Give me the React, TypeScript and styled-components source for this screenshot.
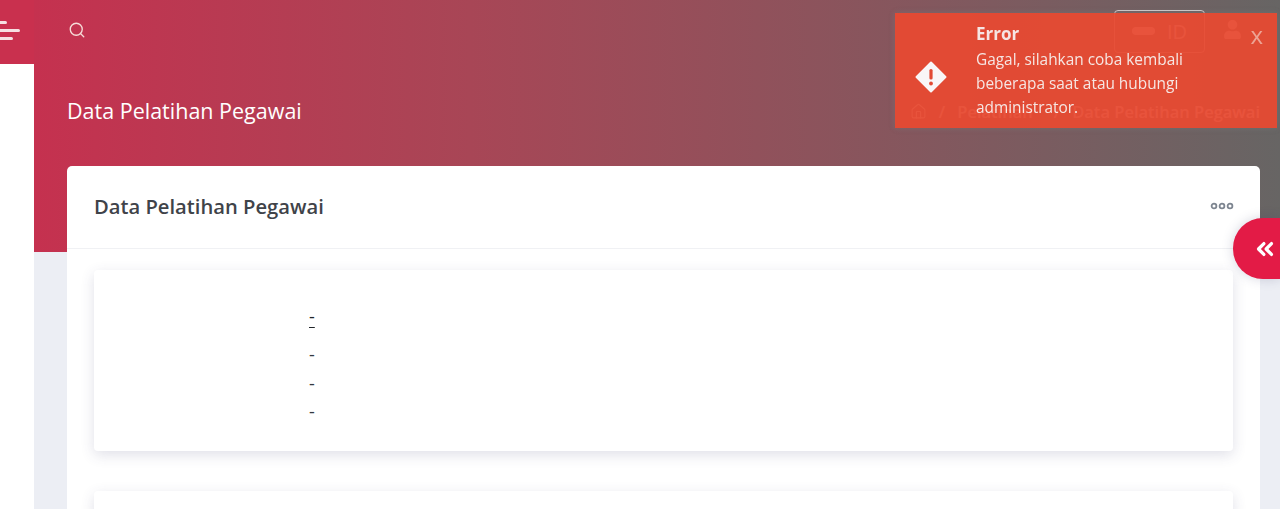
import styled, { createGlobalStyle } from 'styled-components';
import { Search, Home, ChevronsLeft } from 'lucide-react';
import { FaUser } from 'react-icons/fa';

const GlobalStyle = createGlobalStyle`
  html, body {
    margin: 0;
    padding: 0;
    height: 100%;
    overflow: hidden;
    background: #eceef4;
    font-family: "Open Sans", "Noto Sans", sans-serif;
  }
  * {
    box-sizing: border-box;
  }
`;

const Page = styled.div`
  display: flex;
  width: 1280px;
  height: 509px;
  overflow: hidden;
`;

const Sidebar = styled.aside`
  width: 34px;
  flex-shrink: 0;
  display: flex;
  flex-direction: column;
  background: #fff;
`;

const Brand = styled.div`
  height: 64px;
  background: #c9304e;
  display: flex;
  flex-direction: column;
  align-items: flex-start;
  justify-content: center;
  gap: 5px;
  padding-bottom: 4px;
`;

const Bar = styled.span<{ $width: number }>`
  display: block;
  height: 3px;
  width: ${(props) => props.$width}px;
  background: #f6dfe2;
  border-radius: 0 2px 2px 0;
`;

const Main = styled.main`
  flex: 1;
  min-width: 0;
  background:
    linear-gradient(90deg, #c5314f 0%, #a84656 35%, #676564 100%) top left / 100% 252px no-repeat,
    #eceef4;
`;

const Topbar = styled.header`
  height: 60px;
  display: flex;
  align-items: center;
  justify-content: space-between;
  padding: 0 38px 0 34px;
  color: #f6dcd8;
`;

const TopActions = styled.div`
  display: flex;
  align-items: center;
  gap: 18px;
  margin-top: 2px;

  svg {
    margin-top: -4px;
  }
`;

const LangButton = styled.div`
  width: 91px;
  height: 43px;
  border: 1px solid rgba(255, 255, 255, 0.7);
  border-radius: 4px;
  display: flex;
  align-items: center;
  justify-content: center;
  gap: 12px;
  font-size: 20px;
  color: #fff;
`;

const Flag = styled.span`
  width: 23px;
  height: 8px;
  border-radius: 4px;
  background: #fff;
`;

const TitleRow = styled.div`
  height: 104px;
  display: flex;
  align-items: center;
  justify-content: space-between;
  padding: 0 20px 4px 33px;
`;

const PageTitle = styled.h1`
  margin: 0;
  font-size: 21.5px;
  font-weight: 400;
  color: #fff;
`;

const Crumbs = styled.nav`
  display: flex;
  align-items: center;
  gap: 12px;
  margin-top: 2px;
  font-size: 16.5px;
  font-weight: 600;
  color: #fff;
`;

const CrumbParent = styled.span`
  margin-right: 9px;
`;

const Card = styled.section`
  margin: 2px 20px 0 33px;
  background: #fff;
  border-radius: 5px 5px 0 0;
  height: 343px;
  overflow: hidden;
`;

const CardHeader = styled.div`
  height: 83px;
  display: flex;
  align-items: center;
  justify-content: space-between;
  padding: 0 26px 2px 27px;
  border-bottom: 1px solid #f0f1f4;
`;

const CardTitle = styled.h2`
  margin: 0;
  font-size: 20.2px;
  font-weight: 600;
  color: #3f4349;
`;

const MoreDots = styled.svg`
  width: 24px;
  height: 8px;
`;

const CardBody = styled.div`
  padding: 21px 27px 0;
  display: flex;
  flex-direction: column;
  gap: 40px;
`;

const InnerCard = styled.div<{ $tall?: boolean }>`
  height: ${(props) => (props.$tall ? 181 : 60)}px;
  flex-shrink: 0;
  background: #fff;
  border-radius: 4px;
  box-shadow: 0 4px 14px rgba(60, 65, 110, 0.16);
  padding: 32px 0 0 215px;
`;

const DashList = styled.div`
  display: flex;
  flex-direction: column;
  font-size: 18px;
  line-height: 28.5px;
  color: #343a40;
`;

const LinkDash = styled.a`
  color: #212529;
  text-decoration: underline;
  text-underline-offset: 4px;
  line-height: 29px;
  margin-bottom: 9px;
`;

const SideToggle = styled.button`
  position: fixed;
  top: 218px;
  right: 0;
  width: 47px;
  height: 61px;
  padding: 0 0 0 17px;
  border: 0;
  border-radius: 30px 0 0 30px;
  background: #e31b46;
  color: #fff;
  display: flex;
  align-items: center;
  justify-content: center;
  box-shadow: 0 0 12px rgba(60, 65, 110, 0.22);
`;

const Toast = styled.div`
  position: fixed;
  top: 13px;
  left: 895px;
  width: 382px;
  height: 115px;
  display: flex;
  align-items: center;
  padding: 9px 0 0 20px;
  background: #e74a32;
  opacity: 0.95;
  color: #fff;
  box-shadow: 0 0 6px rgba(120, 120, 120, 0.6);
`;

const ToastIcon = styled.svg`
  width: 32px;
  height: 32px;
  flex-shrink: 0;
  margin-right: 29px;
  margin-top: 3px;
`;

const ToastText = styled.div`
  width: 240px;
  font-size: 15.4px;
  line-height: 24px;
  margin-top: -7px;
  color: #fdeeea;
`;

const ToastTitle = styled.div`
  font-weight: 700;
  font-size: 17px;
  line-height: 22px;
  margin-bottom: 3px;
  color: #fdeeea;
`;

const ToastClose = styled.span`
  position: absolute;
  top: 5px;
  right: 14px;
  font-size: 24px;
  color: #f5a797;
`;

export default function App() {
  return (
    <Page>
      <GlobalStyle />
      <Sidebar>
        <Brand>
          <Bar $width={7} />
          <Bar $width={20} />
          <Bar $width={13} />
        </Brand>
      </Sidebar>
      <Main>
        <Topbar>
          <Search size={18} strokeWidth={1.8} />
          <TopActions>
            <LangButton>
              <Flag />
              ID
            </LangButton>
            <FaUser size={19} color="#fff" />
          </TopActions>
        </Topbar>
        <TitleRow>
          <PageTitle>Data Pelatihan Pegawai</PageTitle>
          <Crumbs>
            <Home size={17} strokeWidth={1.5} />
            <span>/</span>
            <CrumbParent>Pelatihan</CrumbParent>
            <span>/</span>
            <span>Data Pelatihan Pegawai</span>
          </Crumbs>
        </TitleRow>
        <Card>
          <CardHeader>
            <CardTitle>Data Pelatihan Pegawai</CardTitle>
            <MoreDots viewBox="0 0 24 8">
              <circle cx="4" cy="4" r="2.4" fill="none" stroke="#7d8590" strokeWidth="1.8" />
              <circle cx="12" cy="4" r="2.4" fill="none" stroke="#7d8590" strokeWidth="1.8" />
              <circle cx="20" cy="4" r="2.4" fill="none" stroke="#7d8590" strokeWidth="1.8" />
            </MoreDots>
          </CardHeader>
          <CardBody>
            <InnerCard $tall>
              <DashList>
                <LinkDash>-</LinkDash>
                <span>-</span>
                <span>-</span>
                <span>-</span>
              </DashList>
            </InnerCard>
            <InnerCard />
          </CardBody>
        </Card>
      </Main>
      <SideToggle>
        <ChevronsLeft size={26} strokeWidth={3} />
      </SideToggle>
      <Toast>
        <ToastIcon viewBox="0 0 32 32">
          <path
            d="M16 1.5 30.5 16 16 30.5 1.5 16Z"
            fill="#fff"
            stroke="#fff"
            strokeWidth="2"
            strokeLinejoin="round"
          />
          <rect x="14.4" y="8" width="3.2" height="10.5" rx="1.5" fill="#e74a32" />
          <circle cx="16" cy="22.5" r="1.9" fill="#e74a32" />
        </ToastIcon>
        <ToastText>
          <ToastTitle>Error</ToastTitle>
          Gagal, silahkan coba kembali beberapa saat atau hubungi administrator.
        </ToastText>
        <ToastClose>x</ToastClose>
      </Toast>
    </Page>
  );
}
